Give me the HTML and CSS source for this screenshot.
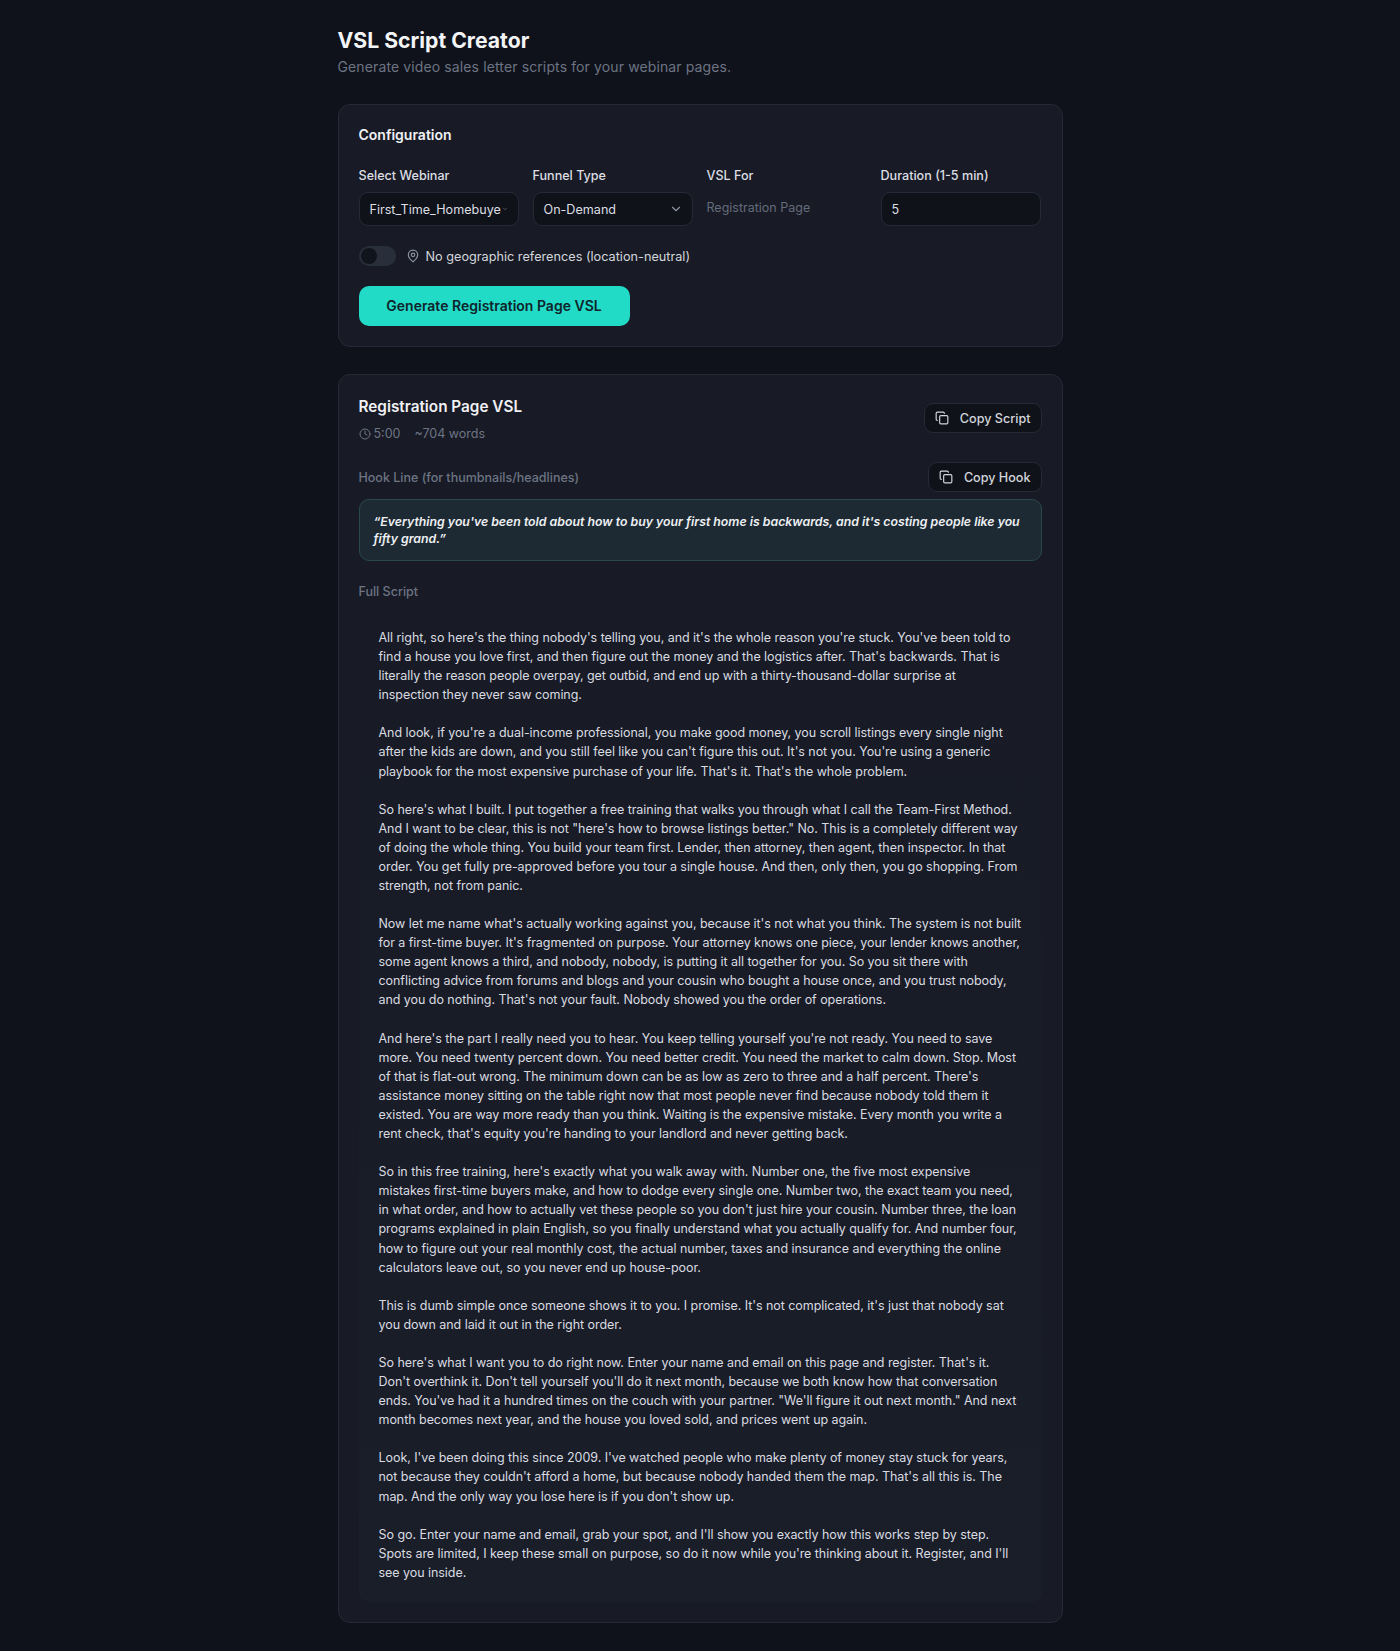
FILE: index.html
```html
<!DOCTYPE html>
<html lang="en">
<head>
<meta charset="utf-8">
<title>VSL Script Creator</title>
<link rel="stylesheet" href="styles.css">
</head>
<body>
<main class="page">
  <header class="page-head">
    <h1>VSL Script Creator</h1>
    <p>Generate video sales letter scripts for your webinar pages.</p>
  </header>

  <section class="card config">
    <h2 class="config-title">Configuration</h2>
    <div class="fields">
      <div class="field">
        <label>Select Webinar</label>
        <div class="control select tiny"><span class="clip">First_Time_Homebuye</span><svg class="chev-tiny" viewBox="0 0 24 24"><path d="m6 9 6 6 6-6"/></svg></div>
      </div>
      <div class="field">
        <label>Funnel Type</label>
        <div class="control select"><span>On-Demand</span><svg class="chev" viewBox="0 0 24 24"><path d="m6 9 6 6 6-6"/></svg></div>
      </div>
      <div class="field">
        <label>VSL For</label>
        <div class="static">Registration Page</div>
      </div>
      <div class="field">
        <label>Duration (1-5 min)</label>
        <div class="control">5</div>
      </div>
    </div>
    <div class="toggle-row">
      <span class="toggle"><span class="thumb"></span></span>
      <svg class="pin" viewBox="0 0 24 24"><path d="M20 10c0 6-8 12-8 12s-8-6-8-12a8 8 0 0 1 16 0Z"/><circle cx="12" cy="10" r="3"/></svg>
      <span>No geographic references (location-neutral)</span>
    </div>
    <button class="generate">Generate Registration Page VSL</button>
  </section>

  <section class="card result">
    <div class="result-head">
      <div>
        <h2 class="result-title">Registration Page VSL</h2>
        <div class="meta">
          <span class="meta-time"><svg viewBox="0 0 24 24"><circle cx="12" cy="12" r="10"/><polyline points="12 6 12 12 16 14"/></svg>5:00</span>
          <span>~704 words</span>
        </div>
      </div>
      <button class="copy"><svg viewBox="0 0 24 24"><rect x="8" y="8" width="14" height="14" rx="2"/><path d="M4 16c-1.1 0-2-.9-2-2V4c0-1.1.9-2 2-2h10c1.1 0 2 .9 2 2"/></svg>Copy Script</button>
    </div>

    <div class="hook-head">
      <span class="section-label hook-label">Hook Line (for thumbnails/headlines)</span>
      <button class="copy"><svg viewBox="0 0 24 24"><rect x="8" y="8" width="14" height="14" rx="2"/><path d="M4 16c-1.1 0-2-.9-2-2V4c0-1.1.9-2 2-2h10c1.1 0 2 .9 2 2"/></svg>Copy Hook</button>
    </div>
    <blockquote class="hook">“Everything you've been told about how to buy your first home is backwards, and it's costing people like you<br>fifty grand.”</blockquote>

    <div class="section-label full-label">Full Script</div>
    <article class="script">
      <p>All right, so here's the thing nobody's telling you, and it's the whole reason you're stuck. You've been told to<br>find a house you love first, and then figure out the money and the logistics after. That's backwards. That is<br>literally the reason people overpay, get outbid, and end up with a thirty-thousand-dollar surprise at<br>inspection they never saw coming.</p>
      <p>And look, if you're a dual-income professional, you make good money, you scroll listings every single night<br>after the kids are down, and you still feel like you can't figure this out. It's not you. You're using a generic<br>playbook for the most expensive purchase of your life. That's it. That's the whole problem.</p>
      <p>So here's what I built. I put together a free training that walks you through what I call the Team-First Method.<br>And I want to be clear, this is not "here's how to browse listings better." No. This is a completely different way<br>of doing the whole thing. You build your team first. Lender, then attorney, then agent, then inspector. In that<br>order. You get fully pre-approved before you tour a single house. And then, only then, you go shopping. From<br>strength, not from panic.</p>
      <p>Now let me name what's actually working against you, because it's not what you think. The system is not built<br>for a first-time buyer. It's fragmented on purpose. Your attorney knows one piece, your lender knows another,<br>some agent knows a third, and nobody, nobody, is putting it all together for you. So you sit there with<br>conflicting advice from forums and blogs and your cousin who bought a house once, and you trust nobody,<br>and you do nothing. That's not your fault. Nobody showed you the order of operations.</p>
      <p>And here's the part I really need you to hear. You keep telling yourself you're not ready. You need to save<br>more. You need twenty percent down. You need better credit. You need the market to calm down. Stop. Most<br>of that is flat-out wrong. The minimum down can be as low as zero to three and a half percent. There's<br>assistance money sitting on the table right now that most people never find because nobody told them it<br>existed. You are way more ready than you think. Waiting is the expensive mistake. Every month you write a<br>rent check, that's equity you're handing to your landlord and never getting back.</p>
      <p>So in this free training, here's exactly what you walk away with. Number one, the five most expensive<br>mistakes first-time buyers make, and how to dodge every single one. Number two, the exact team you need,<br>in what order, and how to actually vet these people so you don't just hire your cousin. Number three, the loan<br>programs explained in plain English, so you finally understand what you actually qualify for. And number four,<br>how to figure out your real monthly cost, the actual number, taxes and insurance and everything the online<br>calculators leave out, so you never end up house-poor.</p>
      <p>This is dumb simple once someone shows it to you. I promise. It's not complicated, it's just that nobody sat<br>you down and laid it out in the right order.</p>
      <p>So here's what I want you to do right now. Enter your name and email on this page and register. That's it.<br>Don't overthink it. Don't tell yourself you'll do it next month, because we both know how that conversation<br>ends. You've had it a hundred times on the couch with your partner. "We'll figure it out next month." And next<br>month becomes next year, and the house you loved sold, and prices went up again.</p>
      <p>Look, I've been doing this since 2009. I've watched people who make plenty of money stay stuck for years,<br>not because they couldn't afford a home, but because nobody handed them the map. That's all this is. The<br>map. And the only way you lose here is if you don't show up.</p>
      <p>So go. Enter your name and email, grab your spot, and I'll show you exactly how this works step by step.<br>Spots are limited, I keep these small on purpose, so do it now while you're thinking about it. Register, and I'll<br>see you inside.</p>
    </article>
  </section>
</main>
</body>
</html>
```
FILE: styles.css
```css
* { box-sizing: border-box; }
html, body { margin: 0; padding: 0; }
body {
  background: #0f121a;
  color: #e6e8ec;
  font-family: "Inter", "Noto Sans", sans-serif;
  font-size: 13px;
}
button { font-family: inherit; }
svg { fill: none; stroke: currentColor; stroke-width: 2; stroke-linecap: round; stroke-linejoin: round; flex: none; }

.page { width: 725px; margin: 0 auto; padding: 24px 0 27px; }
.page-head { margin-bottom: 27px; }
.page-head h1 { margin: 0; font-size: 21.2px; line-height: 32px; font-weight: 700; color: #f3f4f6; }
.page-head p { margin: 1px 0 0; font-size: 14px; line-height: 20px; letter-spacing: 0.12px; color: #6d7484; }

.card { background: #181b25; border: 1px solid #262a37; border-radius: 12px; padding: 20px; }
.config { margin-bottom: 27px; }
.config-title { margin: 0 0 22px; font-size: 14px; line-height: 19px; font-weight: 600; color: #f0f1f4; }

.fields { display: grid; grid-template-columns: repeat(4, 160px); column-gap: 14px; }
.field label { display: block; font-size: 12.6px; line-height: 18px; font-weight: 500; color: #dcdee3; padding-top: 1px; margin-bottom: 7px; }
.control { height: 34px; background: #0f1219; border: 1px solid #262a37; border-radius: 9px; padding: 0 10px; display: flex; align-items: center; font-size: 12.6px; color: #dcdee3; }
.select { justify-content: space-between; }
.clip { white-space: nowrap; width: 132px; flex: none; }
.tiny { padding-right: 11px; }
.chev { width: 14px; height: 14px; color: #8b91a0; margin-right: -1px; }
.chev-tiny { width: 6px; height: 6px; color: #8b91a0; }
.static { font-size: 12.5px; line-height: 18px; color: #646b7b; padding-top: 7px; }

.toggle-row { display: flex; align-items: center; margin-top: 20px; font-size: 12.7px; color: #d3d6dc; height: 20px; }
.toggle { width: 37px; height: 20px; border-radius: 10px; background: #292e3b; padding: 2px; display: block; margin-right: 10px; flex: none; }
.thumb { display: block; width: 16px; height: 16px; border-radius: 50%; background: #11141c; }
.pin { width: 14px; height: 14px; color: #8b91a0; margin-right: 6px; }

.generate { display: block; margin-top: 20px; width: 271px; height: 40px; border: 0; border-radius: 10px; background: #21dbc7; color: #10242b; font-size: 14px; font-weight: 600; padding: 0 0 2px; }

.result-head { display: flex; justify-content: space-between; align-items: center; margin-bottom: 21px; }
.result-title { margin: 0; font-size: 15.3px; line-height: 24px; font-weight: 600; color: #f0f1f4; }
.meta { display: flex; gap: 14px; margin-top: 7px; font-size: 12.5px; line-height: 15px; color: #6d7484; }
.meta-time { display: flex; align-items: center; gap: 3px; }
.meta-time svg { width: 12px; height: 12px; }

.copy { display: flex; align-items: center; gap: 11px; height: 30px; padding: 0 10px; background: #0f1219; border: 1px solid #262a37; border-radius: 9px; color: #d3d6dc; font-size: 12.6px; font-weight: 500; }
.copy svg { width: 14px; height: 14px; }

.hook-head { display: flex; justify-content: space-between; align-items: center; margin-bottom: 7px; }
.section-label { font-size: 12.5px; line-height: 18px; font-weight: 500; color: #6d7484; }
.hook-label { margin-top: 2px; }
.hook { margin: 0; padding: 13px 14px; background: #1d2a33; border: 1px solid #29474c; border-radius: 10px; font-size: 12.3px; line-height: 17px; font-style: italic; font-weight: 600; color: #eef0f3; white-space: nowrap; }

.full-label { margin-top: 22px; margin-bottom: 7px; }
.script { background: linear-gradient(#181b25, #1a1e29); border-radius: 10px; padding: 20px; font-size: 12.5px; letter-spacing: -0.05px; line-height: 19.08px; color: #d9dbe1; white-space: nowrap; }
.script p { margin: 0 0 19.08px; }
.script p:last-child { margin-bottom: 0; }
```
